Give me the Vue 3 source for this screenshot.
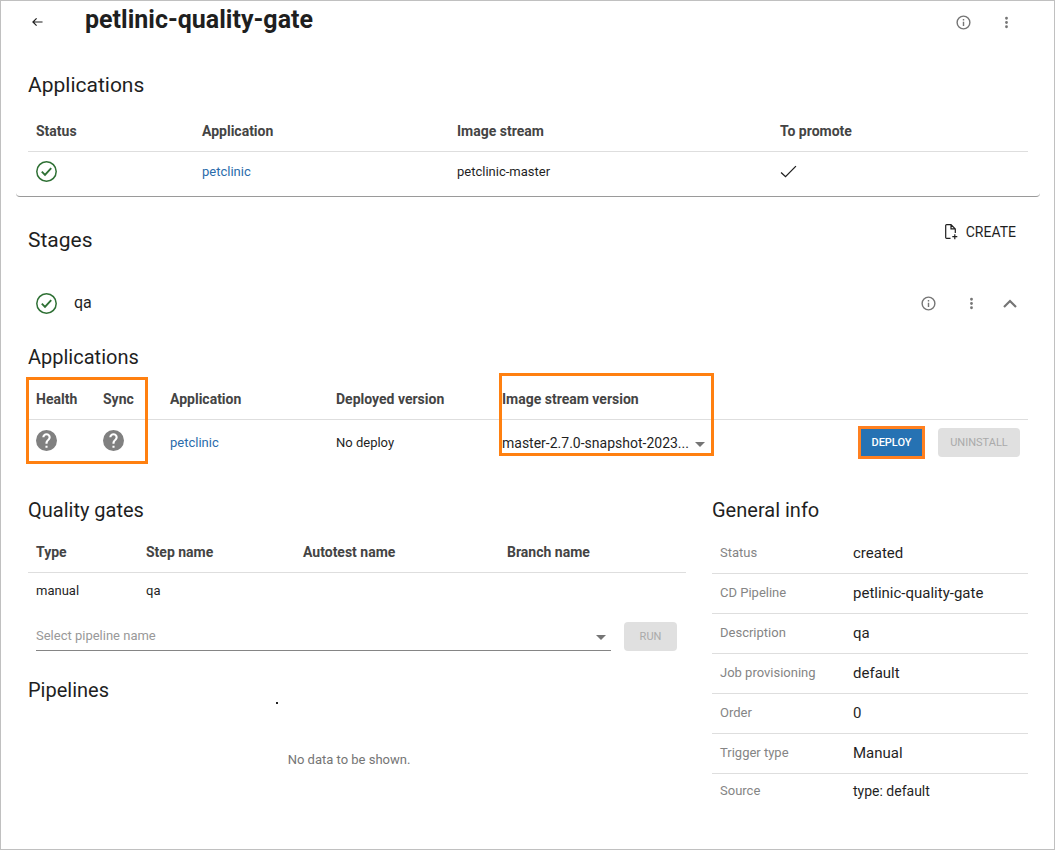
<script setup>
import { ref } from 'vue'

const version = ref('master')
const pipeline = ref('')

const infoRows = [
  { label: 'Status', value: 'created' },
  { label: 'CD Pipeline', value: 'petlinic-quality-gate' },
  { label: 'Description', value: 'qa' },
  { label: 'Job provisioning', value: 'default' },
  { label: 'Order', value: '0' },
  { label: 'Trigger type', value: 'Manual' },
  { label: 'Source', value: 'type: default', small: true },
]
</script>

<template>
  <main class="page">
    <header class="topbar">
      <button class="icon-btn" type="button" aria-label="Back">
        <svg class="back" viewBox="0 0 12 10" aria-hidden="true">
          <path d="M11.5 5H1M5 1L1 5l4 4" fill="none" stroke="currentColor" stroke-width="1.3" />
        </svg>
      </button>
      <h1>petlinic-quality-gate</h1>
      <div class="actions">
        <button class="icon-btn" type="button" aria-label="Information">
          <svg class="icon" viewBox="0 0 24 24" aria-hidden="true">
            <path d="M11 9h2V7h-2m1 13a8 8 0 1 1 0-16 8 8 0 0 1 0 16m0-18a10 10 0 1 0 0 20 10 10 0 0 0 0-20m-1 15h2v-6h-2z" />
          </svg>
        </button>
        <button class="icon-btn" type="button" aria-label="More">
          <svg class="icon" viewBox="0 0 24 24" aria-hidden="true">
            <path d="M12 16a2 2 0 1 1 0 4 2 2 0 0 1 0-4m0-6a2 2 0 1 1 0 4 2 2 0 0 1 0-4m0-6a2 2 0 1 1 0 4 2 2 0 0 1 0-4" />
          </svg>
        </button>
      </div>
    </header>

    <section class="card">
      <h2>Applications</h2>
      <table>
        <colgroup>
          <col class="a1" /><col class="a2" /><col class="a3" /><col />
        </colgroup>
        <thead>
          <tr><th>Status</th><th>Application</th><th>Image stream</th><th>To promote</th></tr>
        </thead>
        <tbody>
          <tr>
            <td>
              <svg class="status ok" viewBox="0 0 21 21" role="img" aria-label="Ready">
                <circle cx="10.5" cy="10.5" r="9.7" fill="none" stroke="currentColor" stroke-width="1.5" />
                <path d="M5.8 10.6l3.2 3.2 6.2-6.6" fill="none" stroke="currentColor" stroke-width="1.9" />
              </svg>
            </td>
            <td><a href="#petclinic">petclinic</a></td>
            <td>petclinic-master</td>
            <td>
              <svg class="tick" viewBox="0 0 18 14" role="img" aria-label="Yes">
                <path d="M1 8l4.8 4.6L17 1.2" fill="none" stroke="currentColor" stroke-width="1.4" />
              </svg>
            </td>
          </tr>
        </tbody>
      </table>
    </section>

    <div class="content">
      <div class="stages-head">
        <h2>Stages</h2>
        <button class="create" type="button">
          <svg viewBox="0 0 13 16" aria-hidden="true">
            <path d="M5.5 14.4H1.6a.9.9 0 0 1-.9-.9V1.6a.9.9 0 0 1 .9-.9H6l4.3 4.2v4M6 .9v4h4.2M9.8 10.2v5M7.3 12.7h5" fill="none" stroke="currentColor" stroke-width="1.2" />
          </svg>
          CREATE
        </button>
      </div>

      <div class="stage">
        <svg class="status ok" viewBox="0 0 21 21" role="img" aria-label="Ready">
          <circle cx="10.5" cy="10.5" r="9.7" fill="none" stroke="currentColor" stroke-width="1.5" />
          <path d="M5.8 10.6l3.2 3.2 6.2-6.6" fill="none" stroke="currentColor" stroke-width="1.9" />
        </svg>
        <span class="stage-name">qa</span>
        <div class="actions">
          <button class="icon-btn" type="button" aria-label="Stage information">
            <svg class="icon" viewBox="0 0 24 24" aria-hidden="true">
              <path d="M11 9h2V7h-2m1 13a8 8 0 1 1 0-16 8 8 0 0 1 0 16m0-18a10 10 0 1 0 0 20 10 10 0 0 0 0-20m-1 15h2v-6h-2z" />
            </svg>
          </button>
          <button class="icon-btn" type="button" aria-label="More stage actions">
            <svg class="icon" viewBox="0 0 24 24" aria-hidden="true">
              <path d="M12 16a2 2 0 1 1 0 4 2 2 0 0 1 0-4m0-6a2 2 0 1 1 0 4 2 2 0 0 1 0-4m0-6a2 2 0 1 1 0 4 2 2 0 0 1 0-4" />
            </svg>
          </button>
          <button class="icon-btn fold" type="button" aria-label="Collapse">
            <svg viewBox="0 0 14 9" aria-hidden="true">
              <path d="M1 8l6-6 6 6" fill="none" stroke="currentColor" stroke-width="2.2" />
            </svg>
          </button>
        </div>
      </div>

      <section>
        <h3>Applications</h3>
        <div class="marked">
          <table>
            <colgroup>
              <col class="b1" /><col class="b1" /><col class="b2" /><col class="b2" /><col class="b3" /><col />
            </colgroup>
            <thead>
              <tr>
                <th>Health</th><th>Sync</th><th>Application</th><th>Deployed version</th>
                <th id="version-label">Image stream version</th><td class="blank"></td>
              </tr>
            </thead>
            <tbody>
              <tr>
                <td v-for="name in ['Health unknown', 'Sync unknown']" :key="name">
                  <svg class="status unknown" viewBox="2 2 20 20" role="img" :aria-label="name">
                    <path d="M15.07 11.25l-.9.92C13.45 12.89 13 13.5 13 15h-2v-.5c0-1.11.45-2.11 1.17-2.83l1.24-1.26c.37-.36.59-.86.59-1.41a2 2 0 0 0-4 0H8a4 4 0 0 1 8 0c0 .88-.36 1.67-.93 2.25M13 19h-2v-2h2M12 2a10 10 0 1 0 0 20 10 10 0 0 0 0-20" />
                  </svg>
                </td>
                <td><a href="#petclinic">petclinic</a></td>
                <td>No deploy</td>
                <td>
                  <div class="select version">
                    <select v-model="version" aria-labelledby="version-label">
                      <option value="master">master-2.7.0-snapshot-2023...</option>
                    </select>
                    <svg viewBox="0 0 10 5" aria-hidden="true"><path d="M0 0h10L5 5z" /></svg>
                  </div>
                </td>
                <td>
                  <div class="row-actions">
                    <button class="btn deploy" type="button">DEPLOY</button>
                    <button class="btn uninstall" type="button" disabled>UNINSTALL</button>
                  </div>
                </td>
              </tr>
            </tbody>
          </table>
          <div class="mark mark-status"></div>
          <div class="mark mark-version"></div>
        </div>
      </section>

      <div class="columns">
        <div>
          <section>
            <h3>Quality gates</h3>
            <table class="gates">
              <colgroup>
                <col class="c1" /><col class="c2" /><col class="c3" /><col />
              </colgroup>
              <thead>
                <tr><th>Type</th><th>Step name</th><th>Autotest name</th><th>Branch name</th></tr>
              </thead>
              <tbody>
                <tr><td>manual</td><td>qa</td><td></td><td></td></tr>
              </tbody>
            </table>
            <div class="run-row">
              <div class="select lined">
                <select v-model="pipeline" aria-label="Pipeline name">
                  <option value="">Select pipeline name</option>
                </select>
                <svg viewBox="0 0 10 5" aria-hidden="true"><path d="M0 0h10L5 5z" /></svg>
              </div>
              <button class="btn run" type="button" disabled>RUN</button>
            </div>
          </section>
          <section>
            <div class="pipelines-head">
              <h3>Pipelines</h3>
              <span class="speck"></span>
            </div>
            <p class="empty">No data to be shown.</p>
          </section>
        </div>

        <section>
          <h3>General info</h3>
          <table class="info">
            <tbody>
              <tr v-for="row in infoRows" :key="row.label">
                <th scope="row">{{ row.label }}</th>
                <td :class="{ small: row.small }">{{ row.value }}</td>
              </tr>
            </tbody>
          </table>
        </section>
      </div>
    </div>
  </main>
</template>

<style>
body {
  background: #fff;
}
</style>

<style scoped>
.page {
  box-sizing: border-box;
  min-height: 100vh;
  border: 1px solid #c0c0c0;
  color: #1f1f1f;
  font-family: Roboto, "Liberation Sans", sans-serif;
  font-size: 13px;
  line-height: 20px;
}
h1, h2, h3, p {
  margin: 0;
}
h1 {
  font-size: 25px;
  font-weight: 700;
  line-height: 38px;
}
h2, h3 {
  font-weight: 400;
  line-height: 28px;
}
h2 {
  font-size: 21px;
}
h3 {
  font-size: 20px;
}
button, select {
  border: 0;
  margin: 0;
  padding: 0;
  background: none;
  color: inherit;
  font: inherit;
}
svg {
  display: block;
}
a {
  color: #2a6cab;
  text-decoration: none;
}
.topbar {
  display: flex;
  align-items: center;
  padding: 0 35px 0 24px;
}
.topbar h1 {
  margin-left: 35px;
}
.topbar .actions {
  padding-top: 4px;
}
.icon-btn {
  display: grid;
  place-items: center;
  width: 25px;
  height: 25px;
  color: #757575;
}
.topbar > .icon-btn {
  margin-top: 4px;
  color: #1f1f1f;
}
.back {
  width: 11px;
  height: 10px;
}
.icon {
  width: 17px;
  height: 17px;
  fill: currentColor;
}
.actions {
  display: flex;
  align-items: center;
  gap: 18px;
  margin-left: auto;
}
.card {
  margin: 0 14px 0 15px;
  padding: 32px 12px 5px;
  border-bottom: 1px solid #9a9a9a;
  border-radius: 4px;
}
.content {
  padding: 0 26px 24px 27px;
}
table {
  width: 100%;
  table-layout: fixed;
  border-collapse: collapse;
}
th, td {
  padding: 0 8px;
  text-align: left;
  white-space: nowrap;
}
thead th, .blank {
  height: 41px;
  border-bottom: 1px solid #dedede;
  color: #444;
  font-size: 14px;
  font-weight: 700;
}
.card h2 {
  margin-bottom: 11px;
}
.card tbody td {
  height: 39px;
}
.a1 { width: 166px; }
.a2 { width: 255px; }
.a3 { width: 323px; }
.status {
  width: 21px;
  height: 21px;
}
.ok {
  color: #2e7034;
}
.unknown {
  fill: #808080;
}
.tick {
  width: 17px;
  height: 13px;
}
.stages-head {
  display: flex;
  align-items: flex-start;
  justify-content: space-between;
  padding: 24px 12px 0 0;
}
.stages-head h2 {
  padding-top: 5px;
}
.create {
  display: flex;
  align-items: center;
  gap: 8px;
  font-size: 14px;
  line-height: 22px;
}
.create svg {
  width: 13px;
  height: 16px;
}
.stage {
  display: flex;
  align-items: center;
  height: 40px;
  margin-top: 29px;
  padding: 0 6px 0 8px;
}
.stage-name {
  margin-left: 17px;
  font-size: 16px;
}
.stage .fold {
  margin-left: -5px;
}
.fold svg {
  width: 14px;
  height: 9px;
}
.stage + section {
  margin-top: 20px;
}
.marked {
  position: relative;
  padding-top: 7px;
}
.marked tbody td {
  height: 45px;
}
.marked tbody .status {
  margin-bottom: 4px;
}
.b1 { width: 67px; }
.b2 { width: 166px; }
.b3 { width: 219px; }
.mark {
  position: absolute;
  box-sizing: border-box;
  border: 3px solid #ff8010;
  pointer-events: none;
}
.mark-status {
  top: 6px;
  left: -2px;
  width: 122px;
  height: 87px;
}
.mark-version {
  top: 2px;
  left: 471px;
  width: 215px;
  height: 83px;
}
.select {
  position: relative;
}
.select select {
  display: block;
  width: 100%;
  height: 24px;
  padding-right: 16px;
  appearance: none;
}
.select svg {
  position: absolute;
  top: 11px;
  right: 5px;
  width: 10px;
  height: 5px;
  fill: #757575;
  pointer-events: none;
}
.version {
  font-size: 14px;
}
.version svg {
  right: 0;
}
.lined {
  flex: 1;
  border-bottom: 1px solid #858585;
}
.lined select {
  height: 28px;
  color: #999;
}
.lined svg {
  top: 13px;
}
.row-actions {
  display: flex;
  align-items: center;
  justify-content: flex-end;
  gap: 13px;
}
.btn {
  height: 29px;
  border-radius: 4px;
  font-size: 11px;
  font-weight: 400;
}
.btn:disabled {
  background: #e0e0e0;
  color: #aaa;
}
.deploy {
  width: 67px;
  height: 33px;
  border: 3px solid #ff8020;
  border-radius: 0;
  background: #2672b3;
  color: #fff;
  font-weight: 500;
}
.uninstall {
  width: 82px;
}
.run {
  width: 53px;
}
.columns {
  display: grid;
  grid-template-columns: 658fr 316fr;
  gap: 26px;
  margin-top: 31px;
}
.gates {
  margin-top: 7px;
}
.gates tbody td {
  height: 36px;
}
.c1 { width: 110px; }
.c2 { width: 157px; }
.c3 { width: 204px; }
.run-row {
  display: flex;
  align-items: center;
  gap: 13px;
  margin-top: 13px;
  padding: 0 9px 0 8px;
}
.pipelines-head {
  display: grid;
  grid-template-columns: 248px 1fr;
  align-items: end;
  margin-top: 25px;
}
.speck {
  width: 2px;
  height: 2px;
  background: #222;
}
.empty {
  margin-top: 46px;
  padding-right: 16px;
  color: #757575;
  text-align: center;
}
.info {
  margin-top: 10px;
}
.info th {
  width: 117px;
  color: #858585;
  font-weight: 400;
}
.info th, .info td {
  height: 37px;
  padding-bottom: 2px;
  border-bottom: 1px solid #dedede;
}
.info td {
  font-size: 15px;
}
.info .small {
  font-size: 14px;
}
.info tr:last-child > * {
  height: 33px;
  border-bottom: 0;
}
</style>
